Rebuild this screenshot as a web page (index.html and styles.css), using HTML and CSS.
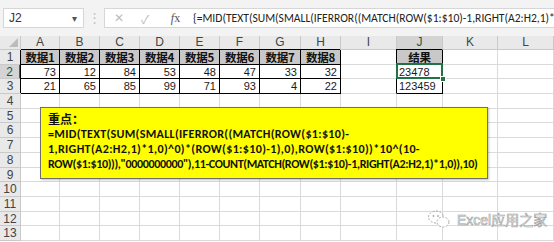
FILE: index.html
```html
<!DOCTYPE html>
<html lang="zh-CN">
  <head>
    <meta charset="UTF-8" />
    <title>Excel</title>
    <link rel="stylesheet" href="styles.css">
  </head>
  <body>
    <div class="page">
      <div class="toolbar">
        <div class="name-box">
          <span>J2</span>
          <span class="name-arrow">&#9662;</span>
        </div>
        <div class="toolbar-sep">&#8942;</div>
        <div class="formula-bar">
          <span class="fb-btn fb-cancel">&#10005;</span>
          <span class="fb-btn fb-ok">&#10003;</span>
          <span class="fb-btn fb-fx"><i>f</i>x</span>
          <span class="fb-text">{=MID(TEXT(SUM(SMALL(IFERROR((MATCH(ROW($1:$10)-1,RIGHT(A2:H2,1)*1,0)^0)*(ROW($1:$10)-1),0),ROW($1:$10))*10^(10-ROW($1:$10))),"0000000000"),11-COUNT(MATCH(ROW($1:$10)-1,RIGHT(A2:H2,1)*1,0)),10)}</span>
        </div>
      </div>

      <div class="sheet">
        <div class="col-head corner"><span class="corner-tri"></span></div>
        <div class="col-head">A</div><div class="col-head">B</div><div class="col-head">C</div><div class="col-head">D</div>
        <div class="col-head">E</div><div class="col-head">F</div><div class="col-head">G</div><div class="col-head">H</div>
        <div class="col-head">I</div><div class="col-head is-active">J</div><div class="col-head">K</div><div class="col-head">L</div>

        <div class="row-head">1</div>
        <div class="cell b th">数据1</div><div class="cell b th">数据2</div><div class="cell b th">数据3</div><div class="cell b th">数据4</div>
        <div class="cell b th">数据5</div><div class="cell b th">数据6</div><div class="cell b th">数据7</div><div class="cell b th">数据8</div>
        <div class="cell bl"></div><div class="cell b th">结果</div><div class="cell"></div><div class="cell"></div>

        <div class="row-head is-active">2</div>
        <div class="cell b num">73</div><div class="cell b num">12</div><div class="cell b num">84</div><div class="cell b num">53</div>
        <div class="cell b num">48</div><div class="cell b num">47</div><div class="cell b num">33</div><div class="cell b num">32</div>
        <div class="cell bl"></div><div class="cell b txt is-selected">23478</div><div class="cell"></div><div class="cell"></div>

        <div class="row-head">3</div>
        <div class="cell b num">21</div><div class="cell b num">65</div><div class="cell b num">85</div><div class="cell b num">99</div>
        <div class="cell b num">71</div><div class="cell b num">93</div><div class="cell b num">4</div><div class="cell b num">22</div>
        <div class="cell bl"></div><div class="cell b txt">123459</div><div class="cell"></div><div class="cell"></div>

        <div class="row-head">4</div>
        <div class="cell"></div><div class="cell"></div><div class="cell"></div><div class="cell"></div><div class="cell"></div><div class="cell"></div>
        <div class="cell"></div><div class="cell"></div><div class="cell"></div><div class="cell"></div><div class="cell"></div><div class="cell"></div>
        <div class="row-head">5</div>
        <div class="cell"></div><div class="cell"></div><div class="cell"></div><div class="cell"></div><div class="cell"></div><div class="cell"></div>
        <div class="cell"></div><div class="cell"></div><div class="cell"></div><div class="cell"></div><div class="cell"></div><div class="cell"></div>
        <div class="row-head">6</div>
        <div class="cell"></div><div class="cell"></div><div class="cell"></div><div class="cell"></div><div class="cell"></div><div class="cell"></div>
        <div class="cell"></div><div class="cell"></div><div class="cell"></div><div class="cell"></div><div class="cell"></div><div class="cell"></div>
        <div class="row-head">7</div>
        <div class="cell"></div><div class="cell"></div><div class="cell"></div><div class="cell"></div><div class="cell"></div><div class="cell"></div>
        <div class="cell"></div><div class="cell"></div><div class="cell"></div><div class="cell"></div><div class="cell"></div><div class="cell"></div>
        <div class="row-head">8</div>
        <div class="cell"></div><div class="cell"></div><div class="cell"></div><div class="cell"></div><div class="cell"></div><div class="cell"></div>
        <div class="cell"></div><div class="cell"></div><div class="cell"></div><div class="cell"></div><div class="cell"></div><div class="cell"></div>
        <div class="row-head">9</div>
        <div class="cell"></div><div class="cell"></div><div class="cell"></div><div class="cell"></div><div class="cell"></div><div class="cell"></div>
        <div class="cell"></div><div class="cell"></div><div class="cell"></div><div class="cell"></div><div class="cell"></div><div class="cell"></div>
        <div class="row-head">10</div>
        <div class="cell"></div><div class="cell"></div><div class="cell"></div><div class="cell"></div><div class="cell"></div><div class="cell"></div>
        <div class="cell"></div><div class="cell"></div><div class="cell"></div><div class="cell"></div><div class="cell"></div><div class="cell"></div>
        <div class="row-head">11</div>
        <div class="cell"></div><div class="cell"></div><div class="cell"></div><div class="cell"></div><div class="cell"></div><div class="cell"></div>
        <div class="cell"></div><div class="cell"></div><div class="cell"></div><div class="cell"></div><div class="cell"></div><div class="cell"></div>
        <div class="row-head">12</div>
        <div class="cell"></div><div class="cell"></div><div class="cell"></div><div class="cell"></div><div class="cell"></div><div class="cell"></div>
        <div class="cell"></div><div class="cell"></div><div class="cell"></div><div class="cell"></div><div class="cell"></div><div class="cell"></div>
        <div class="row-head">13</div>
        <div class="cell"></div><div class="cell"></div><div class="cell"></div><div class="cell"></div><div class="cell"></div><div class="cell"></div>
        <div class="cell"></div><div class="cell"></div><div class="cell"></div><div class="cell"></div><div class="cell"></div><div class="cell"></div>
      </div>

      <!-- zone de texte par-dessus la feuille -->
      <div class="note">
        <div class="note-title">重点：</div>
        <div class="note-line note-line-1">=MID(TEXT(SUM(SMALL(IFERROR((MATCH(ROW($1:$10)-</div>
        <div class="note-line note-line-2">1,RIGHT(A2:H2,1)*1,0)^0)*(ROW($1:$10)-1),0),ROW($1:$10))*10^(10-</div>
        <div class="note-line note-line-3">ROW($1:$10))),"0000000000"),11-COUNT(MATCH(ROW($1:$10)-1,RIGHT(A2:H2,1)*1,0)),10)</div>
      </div>

      <div class="watermark">
        <svg class="watermark-icon" width="24" height="20" viewBox="0 0 24 20">
          <ellipse cx="9" cy="8" rx="7.5" ry="6" fill="none" stroke="#aaa" stroke-width="1" stroke-dasharray="2 1.5" />
          <ellipse cx="16" cy="13" rx="6" ry="5" fill="#fff" stroke="#aaa" stroke-width="1" stroke-dasharray="2 1.5" />
          <circle cx="6.5" cy="7" r="0.9" fill="#aaa" />
          <circle cx="11" cy="7" r="0.9" fill="#aaa" />
        </svg>
        <span class="watermark-text">Excel应用之家</span>
      </div>
    </div>
  </body>
</html>
```
FILE: styles.css
```css
body {
  margin: 0;
  background-color: #fff;
  font-family: 'Liberation Sans', Arial, 'Noto Sans CJK SC', sans-serif;
  color: #1a1a1a;
}

.page {
  position: relative;
  width: 554px;
  height: 242px;
  overflow: hidden;
}

.toolbar {
  display: flex;
  align-items: flex-start;
  height: 36px;
  padding-top: 8px;
  box-sizing: border-box;
  background-color: #f3f3f3;
}

.name-box {
  display: flex;
  align-items: center;
  justify-content: space-between;
  box-sizing: border-box;
  width: 81px;
  height: 20px;
  margin-left: 3px;
  padding: 0 6px 0 5px;
  background-color: #fff;
  border: 1px solid #d6d6d6;
  font-size: 12px;
  color: #333;
}

.name-arrow {
  font-size: 10px;
  color: #555;
}

.toolbar-sep {
  width: 20px;
  text-align: center;
  font-size: 13px;
  line-height: 20px;
  color: #c2c2c2;
}

.formula-bar {
  flex: 1;
  display: flex;
  align-items: center;
  height: 20px;
  box-sizing: border-box;
  background-color: #fff;
  border: 1px solid #d6d6d6;
  border-right: 0;
  white-space: nowrap;
  overflow: hidden;
}

.fb-btn {
  flex: none;
  text-align: center;
  color: #bdbdbd;
}

.fb-cancel {
  width: 26px;
  margin-left: 1px;
  font-size: 12px;
}

.fb-ok {
  width: 26px;
  font-size: 12px;
}

.fb-fx {
  width: 35px;
  font-family: 'Liberation Serif', serif;
  font-size: 12px;
  color: #555;
}

.fb-text {
  font-family: Carlito, 'Liberation Sans', sans-serif;
  font-size: 11.6px;
  color: #222;
}

.sheet {
  display: grid;
  grid-template-columns: 21px 39px 40px 40px 40px 40px 40px 41px 40px 56px 46px 55px 56px;
  grid-template-rows: 14px repeat(13, 14.7px);
}

.col-head,
.row-head {
  box-sizing: border-box;
  background-color: #e9e9e9;
  border-right: 1px solid #c9c9c9;
  border-bottom: 1px solid #c9c9c9;
  color: #444;
  font-size: 12px;
  line-height: 13px;
  text-align: center;
}

.row-head {
  line-height: 14px;
}

.col-head.is-active {
  background-color: #d4d4d4;
  border-bottom: 1px solid #217346;
  color: #1e5c3a;
}

.row-head.is-active {
  background-color: #d4d4d4;
  border-right: 2px solid #217346;
  color: #1e5c3a;
}

.corner {
  position: relative;
}

.corner-tri {
  position: absolute;
  right: 2px;
  bottom: 2px;
  border-style: solid;
  border-width: 0 0 9px 9px;
  border-color: transparent transparent #bcbcbc transparent;
}

.cell {
  box-sizing: border-box;
  border-right: 1px solid #dadada;
  border-bottom: 1px solid #dadada;
  font-size: 11px;
  line-height: 14px;
  white-space: nowrap;
  overflow: hidden;
}

.cell.b {
  border-color: #000;
  box-shadow: -1px -1px 0 #000;
}

.cell.bl {
  border-right-color: #000;
}

.th {
  overflow: visible;
  background-color: #c8c8c8;
  font-family: 'Noto Sans CJK SC', sans-serif;
  font-weight: 700;
  font-size: 11.5px;
  line-height: 14px;
  letter-spacing: -0.3px;
  text-align: center;
  color: #111;
}

.num {
  padding-right: 3px;
  text-align: right;
}

.txt {
  padding-left: 2px;
}

.is-selected {
  position: relative;
  overflow: visible;
  z-index: 1;
}

.is-selected::after {
  content: '';
  position: absolute;
  left: -1px;
  top: -2px;
  right: -1px;
  bottom: -1px;
  border: 2px solid #217346;
}

.is-selected::before {
  content: '';
  position: absolute;
  right: -4px;
  bottom: -4px;
  width: 4px;
  height: 4px;
  background-color: #217346;
  border: 1px solid #fff;
  z-index: 2;
}

.note {
  position: absolute;
  left: 40px;
  top: 107px;
  width: 448px;
  height: 72px;
  box-sizing: border-box;
  padding: 3px 0 0 7px;
  background-color: #ffff00;
  border: 1px solid #6e6e6e;
  box-shadow: 1px 1px 2px rgba(0, 0, 0, 0.25);
  font-family: Carlito, 'Liberation Sans', sans-serif;
  font-weight: 700;
  font-size: 12.1px;
  line-height: 15px;
  color: #111;
  white-space: nowrap;
}

.note-title {
  font-family: 'Noto Sans CJK SC', sans-serif;
  font-size: 12px;
}

.note-line-1 {
  letter-spacing: 0.3px;
}

.note-line-2 {
  letter-spacing: 0.33px;
}

.note-line-3 {
  letter-spacing: -0.38px;
}

.watermark {
  position: absolute;
  left: 427px;
  top: 209px;
  display: flex;
  align-items: center;
  gap: 6px;
}

.watermark-text {
  font-family: 'Liberation Sans', 'Noto Sans CJK SC', sans-serif;
  font-size: 14px;
  color: #fff;
  -webkit-text-stroke: 0.6px #9a9a9a;
}
```
